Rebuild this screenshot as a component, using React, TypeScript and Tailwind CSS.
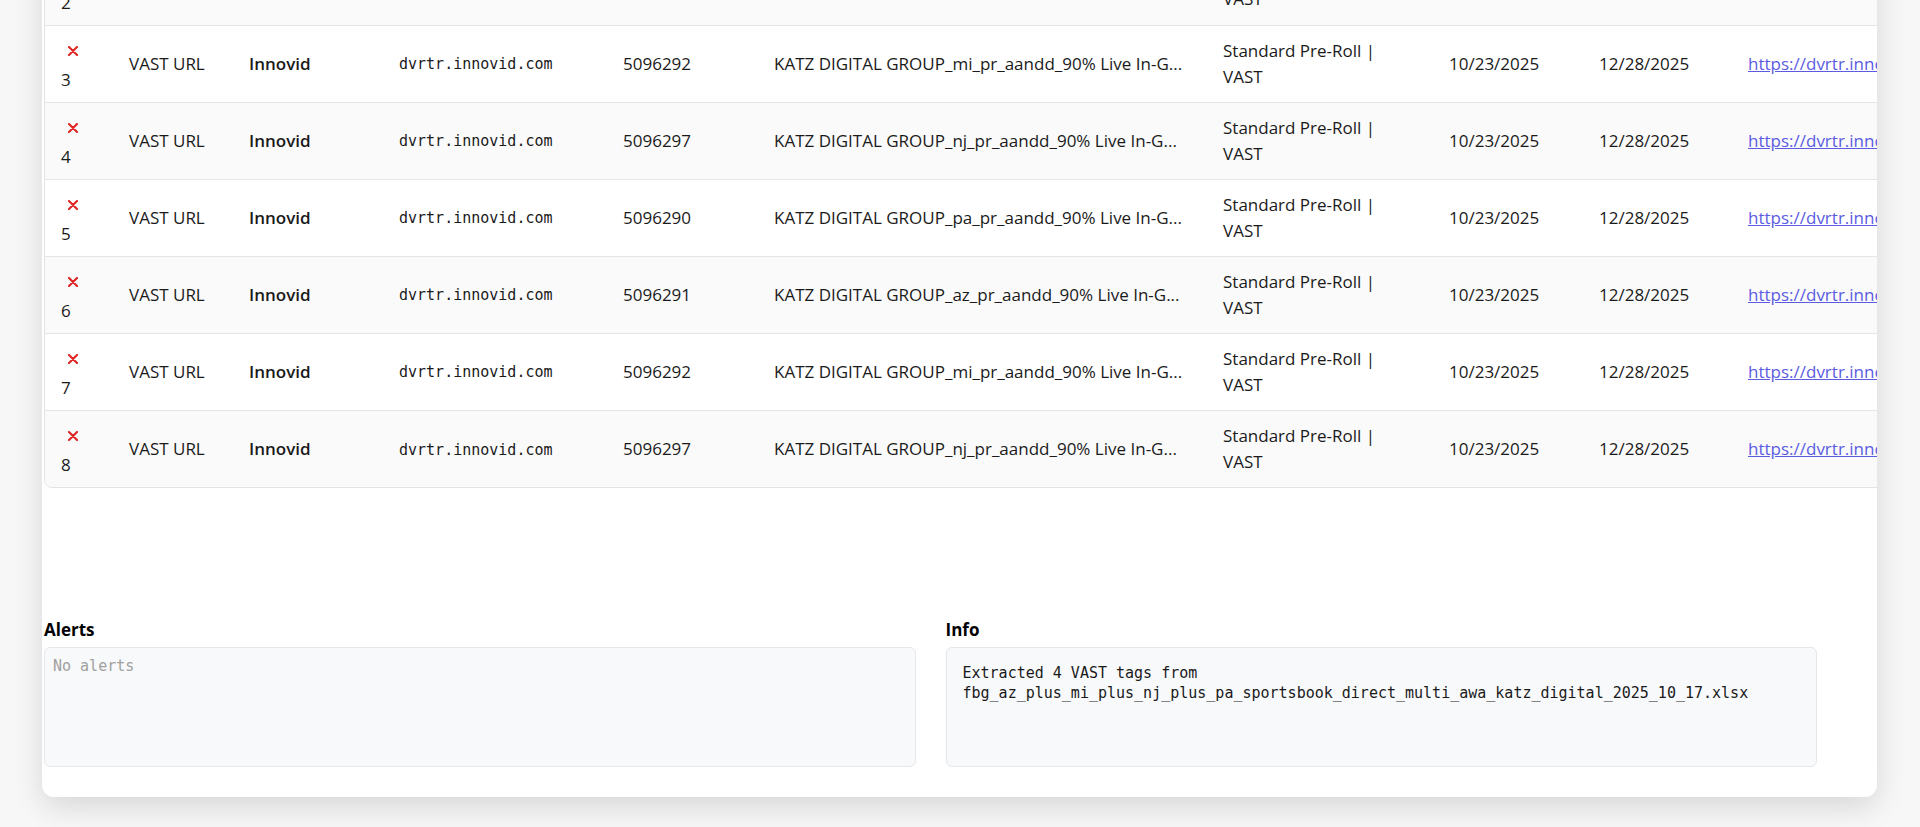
import React from "react";

type Row = { n: number; id: string; st: string };

const rows: Row[] = [
  { n: 2, id: "5096291", st: "az" },
  { n: 3, id: "5096292", st: "mi" },
  { n: 4, id: "5096297", st: "nj" },
  { n: 5, id: "5096290", st: "pa" },
  { n: 6, id: "5096291", st: "az" },
  { n: 7, id: "5096292", st: "mi" },
  { n: 8, id: "5096297", st: "nj" },
];

const sans = { fontFamily: '"Open Sans", "Noto Sans", sans-serif' };
const mono = { fontFamily: '"DejaVu Sans Mono", "Liberation Mono", monospace' };

function XIcon() {
  return (
    <svg width="10" height="10" viewBox="0 0 10 10" aria-hidden="true">
      <path d="M1 1 L9 9 M9 1 L1 9" stroke="#e02424" strokeWidth="2.1" strokeLinecap="round" />
    </svg>
  );
}

export default function App() {
  return (
    <div className="min-h-screen w-full overflow-hidden bg-[#f7f7f7] pl-[42px] text-[#1a1a1a]" style={sans}>
      <div className="-mt-[53px] w-[1835px] overflow-hidden rounded-xl bg-white pb-[30px] pl-[2px] shadow-[0_10px_30px_rgba(0,0,0,0.13)]">
        <div className="w-[2289px] overflow-hidden rounded-lg border border-[#e3e3e3]">
          <table className="w-[2287px] table-fixed border-collapse text-[17px] leading-[25.5px]">
            <colgroup>
              <col className="w-[68px]" />
              <col className="w-[120px]" />
              <col className="w-[150px]" />
              <col className="w-[224px]" />
              <col className="w-[151px]" />
              <col className="w-[449px]" />
              <col className="w-[226px]" />
              <col className="w-[150px]" />
              <col className="w-[149px]" />
              <col className="w-[600px]" />
            </colgroup>
            <tbody>
              {rows.map((r, i) => (
                <tr
                  key={r.n}
                  className={`h-[77px] ${i === rows.length - 1 ? "" : "border-b border-[#e5e5e5]"} ${
                    r.n % 2 === 0 ? "bg-[#fafafa]" : "bg-white"
                  }`}
                >
                  <td className="px-4 align-middle">
                    <div className="flex flex-col items-start">
                      <button className="flex h-[32px] w-[24px] items-center justify-center">
                        <XIcon />
                      </button>
                      <span>{r.n}</span>
                    </div>
                  </td>
                  <td className="px-4 align-middle whitespace-nowrap">VAST URL</td>
                  <td className="px-4 align-middle font-semibold whitespace-nowrap">Innovid</td>
                  <td className="px-4 pt-[3px] align-middle whitespace-nowrap text-[15px]" style={mono}>
                    dvrtr.innovid.com
                  </td>
                  <td className="px-4 align-middle">{r.id}</td>
                  <td className="px-4 align-middle whitespace-nowrap">
                    {`KATZ DIGITAL GROUP_${r.st}_pr_aandd_90% Live In-G...`}
                  </td>
                  <td className="px-4 align-middle">
                    <div className="w-[165px]">Standard Pre-Roll | VAST</div>
                  </td>
                  <td className="px-4 align-middle">10/23/2025</td>
                  <td className="px-4 align-middle">12/28/2025</td>
                  <td className="px-4 align-middle whitespace-nowrap">
                    <a href="#" className="text-[#5b5ce2] underline">
                      https://dvrtr.innovid.com/vast/tag/{r.id}
                    </a>
                  </td>
                </tr>
              ))}
            </tbody>
          </table>
        </div>

        <div className="mt-[129px] grid w-[1773px] grid-cols-2 gap-[30px]">
          <div>
            <div className="mb-[5px] text-[17px] font-bold leading-[25px] text-black">Alerts</div>
            <div
              className="h-[120px] rounded-md border border-[#e5e7eb] bg-[#f8f9fa] p-2 text-[15px] leading-[20px] text-[#a0a0a0]"
              style={mono}
            >
              No alerts
            </div>
          </div>
          <div>
            <div className="mb-[5px] text-[17px] font-bold leading-[25px] text-black">Info</div>
            <div
              className="h-[120px] rounded-md border border-[#e5e7eb] bg-[#f8f9fa] px-4 py-4 text-[15px] leading-[19.5px] text-[#1a1a1a]"
              style={mono}
            >
              <div>Extracted 4 VAST tags from</div>
              <div>fbg_az_plus_mi_plus_nj_plus_pa_sportsbook_direct_multi_awa_katz_digital_2025_10_17.xlsx</div>
            </div>
          </div>
        </div>
      </div>
    </div>
  );
}
